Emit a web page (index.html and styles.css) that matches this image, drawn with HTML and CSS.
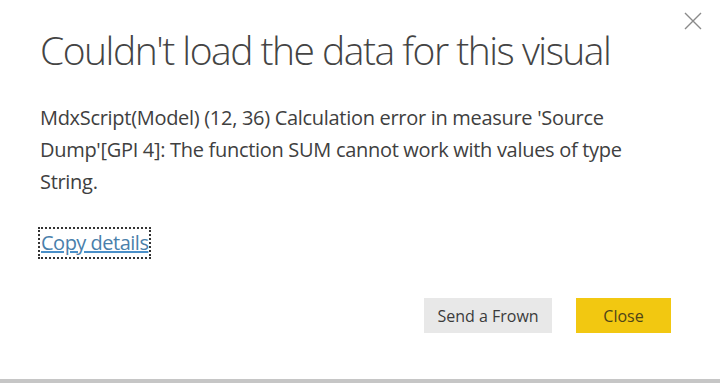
FILE: index.html
```html
<!DOCTYPE html>
<html>
<head>
<meta charset="utf-8">
<link rel="stylesheet" href="styles.css">
</head>
<body>
<div class="page">
  <div class="dialog">
    <button class="close-x" aria-label="Close">
      <svg width="18" height="18" viewBox="0 0 18 18"><path d="M1 1 L17 17 M17 1 L1 17" stroke="#8a8a8a" stroke-width="1.4" fill="none"/></svg>
    </button>
    <h1 class="title">Couldn't load the data for this visual</h1>
    <p class="message">MdxScript(Model) (12, 36) Calculation error in measure 'Source Dump'[GPI 4]: The function SUM cannot work with values of type String.</p>
    <div class="copy-row"><a class="copy" href="#">Copy details</a></div>
    <div class="actions">
      <button class="btn btn-secondary">Send a Frown</button>
      <button class="btn btn-primary">Close</button>
    </div>
  </div>
  <div class="bottom-bar"></div>
</div>
</body>
</html>
```
FILE: styles.css
```css
html, body {
  margin: 0;
  padding: 0;
  background: #ffffff;
}
.page {
  width: 720px;
  height: 383px;
  display: flex;
  flex-direction: column;
  overflow: hidden;
}
.dialog {
  position: relative;
  flex: 1;
  display: flex;
  flex-direction: column;
  padding: 0 40px;
  font-family: "Open Sans", sans-serif;
  color: #3b3b3b;
}
.close-x {
  position: absolute;
  top: 12px;
  right: 18px;
  width: 18px;
  height: 18px;
  padding: 0;
  border: 0;
  background: none;
}
.close-x svg { display: block; }
.title {
  margin: 26px 0 0 0;
  font-weight: 300;
  font-size: 39px;
  line-height: 48px;
  color: #444444;
  letter-spacing: -1.5px;
  white-space: nowrap;
}
.message {
  margin: 28px 0 0 0;
  font-size: 20px;
  line-height: 32px;
  color: #404040;
  letter-spacing: -0.3px;
  width: 590px;
}
.copy-row {
  margin-top: 31px;
  display: flex;
}
.copy {
  display: inline-block;
  font-size: 20px;
  line-height: 28px;
  color: #4a7fab;
  text-decoration: underline;
  text-decoration-color: #4a8fc8;
  outline: 2px dotted #333;
  outline-offset: 0;
  padding: 0 1px;
  letter-spacing: -0.5px;
}
.actions {
  margin-top: 41px;
  display: flex;
  justify-content: flex-end;
  gap: 24px;
  padding-right: 9px;
}
.btn {
  height: 35px;
  border: 0;
  font-family: "Open Sans", sans-serif;
  font-size: 16px;
  color: #3b3b3b;
  padding: 0;
}
.btn-secondary {
  width: 128px;
  background: #e8e8e8;
}
.btn-primary {
  width: 95px;
  background: #f2c811;
  color: #4f4418;
}
.bottom-bar {
  height: 4px;
  background: #c6c6c6;
}
```
